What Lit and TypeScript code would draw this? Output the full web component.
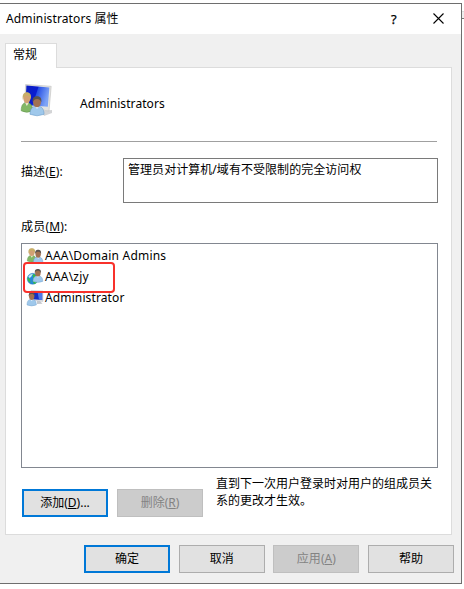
import { LitElement, html, svg, css } from "lit";
import { customElement, property } from "lit/decorators.js";

const green = svg`<path d="M0 15.5C0 10 3 8.5 6 8.5S12 10 12 15.5Q6 18 0 15.5Z" fill="#82b766" stroke="#5c9247" stroke-width=".5"/><path d="M4 8.3L6 11.5L8.3 8.3Z" fill="#f3ead8"/><ellipse cx="6" cy="5" rx="3.7" ry="4.3" fill="#d2a274"/><path d="M1.8 6.5C.8 1.5 3 0 6 0S11.4 1.5 10.2 6.5C9.3 3.5 8 3 6 3S2.7 3.5 1.8 6.5Z" fill="#c8ae68"/>`;
const blue = svg`<path d="M0 15.5C0 10 3 8.5 6.5 8.5S13 10 13 15.5Q6.5 18 0 15.5Z" fill="#9fc8eb" stroke="#6699c8" stroke-width=".5"/><path d="M4.5 8.3L6.5 11L8.5 8.3Z" fill="#eaf4fb"/><ellipse cx="6.5" cy="5" rx="3.7" ry="4.5" fill="#a17151"/><path d="M2.5 5.2C2 1 4 0 6.5 0S11 1 10.5 5.2C9.5 3 8.5 2.3 6.5 2.3S3.4 3 2.5 5.2Z" fill="#5a534e"/>`;

@customElement("principal-icon")
class PrincipalIcon extends LitElement {
  @property() kind = "group";
  static styles = css`:host{display:block}svg{display:block;width:100%;height:100%;overflow:visible}`;
  render() {
    if (this.kind === "large")
      return html`<svg viewBox="0 0 32 34">
        <defs>
          <linearGradient id="s" x1="0" y1="0" x2="1" y2=".3"><stop offset="0" stop-color="#0c1fc0"/><stop offset=".5" stop-color="#0a1cd0"/><stop offset=".54" stop-color="#2850e4"/><stop offset="1" stop-color="#7ea4f6"/></linearGradient>
        </defs>
        <path d="M21 27L31 26L31 29L23 32Z" fill="#d3d4d6"/>
        <path d="M4.6 .5L30.2 2.3L28 27L3.5 23.5Z" fill="#e3e3e0" stroke="#bfc0bf" stroke-width=".6"/>
        <path d="M5.4 1.4L28.4 3.5L26.8 22.8L4.5 21Z" fill="url(#s)"/>
        <g transform="translate(.2 8.2) scale(.94 1.2)">${green}</g>
        <g transform="translate(9 12.2) scale(1.08 1.17)">${blue}</g>
      </svg>`;
    if (this.kind === "domain")
      return html`<svg viewBox="0 0 16 16">
        <circle cx="5.7" cy="9.8" r="5.5" fill="#2589da" stroke="#2b73ae" stroke-width=".4"/>
        <path d="M5.5 5L9 6L8 9L11 11Q10 14.5 7 15L5.5 12L6.5 9.5ZM.7 8L3 10.5L3.5 14Q.7 12.5 .5 10Z" fill="#34bd45"/>
        <path d="M1.3 7.5Q3 4.8 6 4.8L4 8L2.5 9Z" fill="#c4edf2"/>
        <g transform="translate(6 0) scale(.75 .8)">${blue}</g>
      </svg>`;
    if (this.kind === "user")
      return html`<svg viewBox="0 0 16 16">
        <path d="M4 .4L16 1V11.4L5 10.5Z" fill="#dcdfe5" stroke="#b3b7c0" stroke-width=".4"/>
        <path d="M4.8 1.3L15.2 2V10L5.2 9.3Z" fill="#142fc4"/><path d="M10.5 1.8L15.2 2V10L12 9.7Z" fill="#4c78e9"/>
        <path d="M10 11L13 11L15.5 13.8L10 14Z" fill="#c5c8ce"/>
        <g transform="translate(0 2.2) scale(.72 .82)">${blue}</g>
      </svg>`;
    return html`<svg viewBox="0 0 16 16">
      <g transform="translate(.3 .3) scale(.75 .82)">${green}</g>
      <g transform="translate(6.4 1.8) scale(.73 .83)">${blue}</g>
    </svg>`;
  }
}

@customElement("dialog-button")
class DialogButton extends LitElement {
  @property() label = "";
  @property() key = "";
  @property() tail = "";
  @property({ type: Boolean, reflect: true }) primary = false;
  @property({ type: Boolean, reflect: true }) disabled = false;
  static styles = css`
    :host{display:block;width:86px;height:28px}
    button{box-sizing:border-box;width:100%;height:100%;margin:0;padding:0;display:flex;align-items:center;justify-content:center;font:inherit;letter-spacing:inherit;color:#000;background:#e1e1e1;border:1px solid #adadad}
    :host([primary]) button{border:2px solid #0078d7}
    :host([disabled]) button{background:#ccc;border-color:#bfbfbf;color:#838383}
    u{text-underline-offset:1px;text-decoration-thickness:1px}
  `;
  render() {
    return html`<button ?disabled=${this.disabled}><span>${this.label}${this.key ? html`(<u>${this.key}</u>)` : ""}${this.tail}</span></button>`;
  }
}

const members = [
  { kind: "group", name: "AAA\\Domain Admins" },
  { kind: "domain", name: "AAA\\zjy" },
  { kind: "user", name: "Administrator" },
];

@customElement("app-root")
class AppRoot extends LitElement {
  static styles = css`
    :host{display:block;position:relative;width:464px;height:589px;overflow:hidden;background:#fff;color:#000;font:12px/18px "Noto Sans","Noto Sans CJK SC",sans-serif}
    *{box-sizing:border-box}
    .behind{position:absolute;right:0;top:11px;width:2px;height:8px;background:#eee;border-top:1px solid #ddd;border-bottom:1px solid #777}
    .window{margin-top:3px;width:462px;height:581px;background:#f0f0f0;border:1px solid #6e6e6e;border-left:0}
    .title{display:flex;height:30px;background:#fff;align-items:center;padding-left:6px}
    .title .name{flex:1}
    .latin{letter-spacing:.12px}
    .wide{letter-spacing:.22px}
    .help{width:10px;font-size:13px;margin-right:32px;-webkit-text-stroke:.25px}
    .close{width:11px;height:11px;margin:0 17px 2px 0}
    .tab{position:relative;margin:9px 0 0 5px;width:52px;height:25px;background:#fff;border:1px solid #dcdcdc;border-bottom:0;padding:2px 0 0 7px;z-index:1}
    .panel{margin:-1px 0 0 5px;width:447px;height:468px;background:#fff;border:1px solid #dcdcdc;padding:16px 13px 0 15px}
    .head{display:flex;height:58px;margin-right:1px;border-bottom:1px solid #a0a0a0;align-items:flex-start}
    .head principal-icon{width:32px;height:34px}
    .head span{margin:11px 0 0 27px;letter-spacing:.08px}
    .desc{display:flex;margin-top:16px;height:45px}
    .desc label{width:102px;padding-top:5px;letter-spacing:.1px}
    .field{flex:1;border:1px solid #7a7a7a;padding:2px 4px;letter-spacing:.05px}
    .members{display:block;margin-top:15px;height:25px;letter-spacing:.2px}
    u{text-underline-offset:1px;text-decoration-thickness:1px}
    .list{position:relative;height:225px;border:1px solid #828790;padding:1px 5px}
    .row{display:flex;align-items:center;height:21px}
    .row principal-icon{width:16px;height:16px;margin-right:2px}
    .mark{position:absolute;left:.5px;top:18px;width:92px;height:31px;border:2px solid #f8312b;border-radius:4px}
    .actions{display:flex;margin:21px 0 0 1px;gap:9px}
    .note{margin:-14px -6px 0 4px;line-height:17px;width:222px}
    .footer{display:flex;justify-content:space-between;width:370px;margin:10px 0 0 84px}
  `;
  render() {
    return html`
      <div class="behind"></div>
      <div class="window">
        <div class="title"><span class="name"><span class="latin">Administrators</span> 属性</span><span class="help">?</span>
          <svg class="close" viewBox="0 0 11 11"><path d="M.5 .5L10.5 10.5M10.5 .5L.5 10.5" stroke="#000" stroke-width="1.1"/></svg></div>
        <div class="tab">常规</div>
        <div class="panel">
          <div class="head"><principal-icon kind="large"></principal-icon><span>Administrators</span></div>
          <div class="desc"><label>描述(<u>E</u>):</label><div class="field">管理员对计算机/域有不受限制的完全访问权</div></div>
          <label class="members">成员(<u>M</u>):</label>
          <div class="list">
            ${members.map((m) => html`<div class="row"><principal-icon kind=${m.kind}></principal-icon><span class=${m.kind === "user" ? "latin" : "wide"}>${m.name}</span></div>`)}
            <div class="mark"></div>
          </div>
          <div class="actions">
            <dialog-button primary label="添加" key="D" tail="..."></dialog-button>
            <dialog-button disabled label="删除" key="R"></dialog-button>
            <div class="note">直到下一次用户登录时对用户的组成员关系的更改才生效。</div>
          </div>
        </div>
        <div class="footer">
          <dialog-button primary label="确定"></dialog-button>
          <dialog-button label="取消"></dialog-button>
          <dialog-button disabled label="应用" key="A"></dialog-button>
          <dialog-button label="帮助"></dialog-button>
        </div>
      </div>`;
  }
}
